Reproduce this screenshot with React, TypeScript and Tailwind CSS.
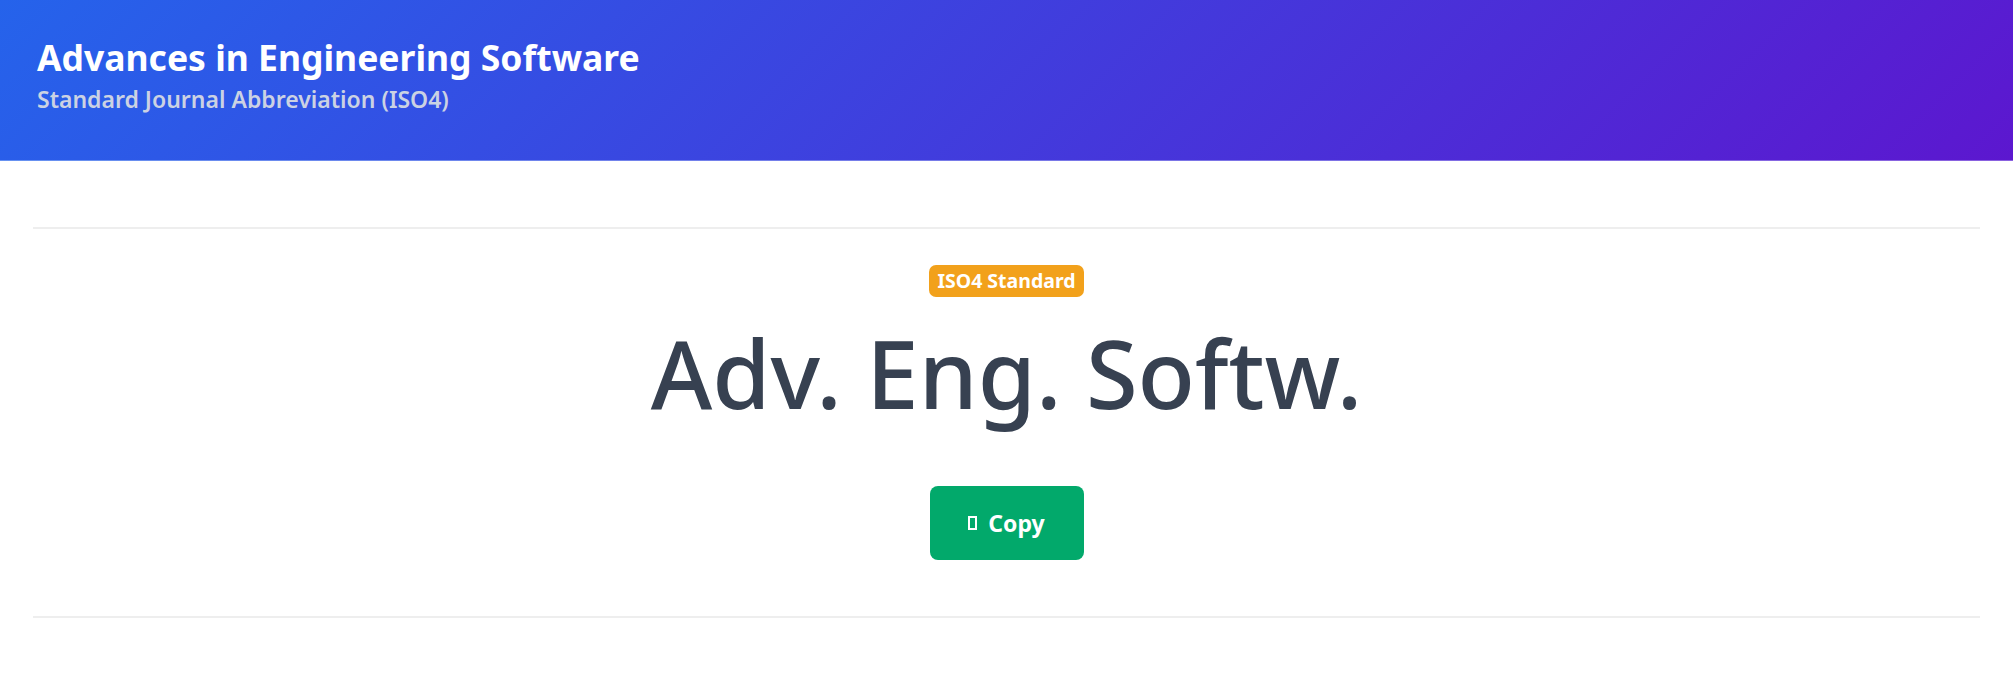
export default function App() {
  return (
    <div className="min-h-screen bg-white font-['Noto_Sans',sans-serif]">
      <header className="border-b border-white/30 bg-[linear-gradient(135deg,#2563eb,#5c17cf)] px-[37px] pt-[36px] pb-[46px] text-white">
        <h1 className="text-[35.5px] font-bold leading-[1.2]">Advances in Engineering Software</h1>
        <p className="mt-[6px] text-[23px] font-semibold leading-[1.3] text-[#cbd2e3]">
          Standard Journal Abbreviation (ISO4)
        </p>
      </header>

      <main className="px-[33px] pt-[66px]">
        <section className="flex flex-col items-center border-y-2 border-[#eeeeee] pt-[36px] pb-[56px]">
          <span className="rounded-[7px] bg-[#f2a11b] px-[8px] py-[3px] text-[19.5px] font-bold leading-[26px] text-white">
            ISO4 Standard
          </span>
          <div className="mt-[20px] text-[94px] font-medium leading-[1.2] text-[#374151]">
            Adv. Eng. Softw.
          </div>
          <button
            type="button"
            className="mt-[56px] flex h-[74px] w-[154px] items-center justify-center gap-[11px] rounded-[8px] bg-[#02a96b] text-[23px] font-bold text-white"
          >
            <span className="inline-block h-[14px] w-[9px] border-2 border-white" />
            Copy
          </button>
        </section>
      </main>
    </div>
  );
}
